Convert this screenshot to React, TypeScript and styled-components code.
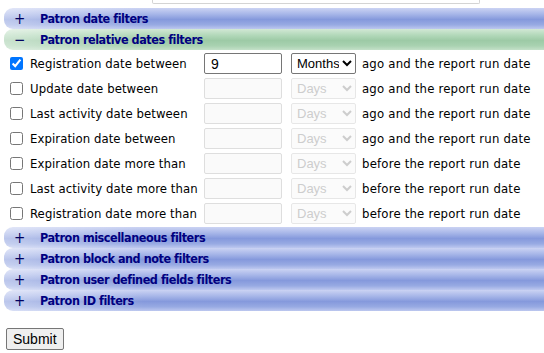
import React from 'react'
import styled, { createGlobalStyle } from 'styled-components'

const GlobalStyle = createGlobalStyle`
  body {
    margin: 0;
    background: #fff;
    font-family: 'DejaVu Sans Condensed', 'DejaVu Sans', sans-serif;
  }
`

type Unit = 'Days' | 'Months'

const RelativeRows: { label: string; checked: boolean; value: string; unit: Unit; tail: string }[] = [
  { label: 'Registration date between', checked: true, value: '9', unit: 'Months', tail: 'ago and the report run date' },
  { label: 'Update date between', checked: false, value: '', unit: 'Days', tail: 'ago and the report run date' },
  { label: 'Last activity date between', checked: false, value: '', unit: 'Days', tail: 'ago and the report run date' },
  { label: 'Expiration date between', checked: false, value: '', unit: 'Days', tail: 'ago and the report run date' },
  { label: 'Expiration date more than', checked: false, value: '', unit: 'Days', tail: 'before the report run date' },
  { label: 'Last activity date more than', checked: false, value: '', unit: 'Days', tail: 'before the report run date' },
  { label: 'Registration date more than', checked: false, value: '', unit: 'Days', tail: 'before the report run date' },
]

const LowerSections = [
  'Patron miscellaneous filters',
  'Patron block and note filters',
  'Patron user defined fields filters',
  'Patron ID filters',
]

const Page = styled.div`
  padding: 0 0 0 4px;
`

const CutOffPanel = styled.div`
  margin-left: 148px;
  width: 326px;
  height: 3px;
  border: 1px solid #d4d4d4;
  border-top: none;
  border-radius: 0 0 2px 2px;
`

const Sections = styled.div`
  margin-top: 4px;
`

const SectionBar = styled.div<{ $open?: boolean }>`
  display: flex;
  align-items: center;
  height: 21px;
  border-radius: 9px 0 0 9px;
  background:
    linear-gradient(to right, rgba(255, 255, 255, 0.45), rgba(255, 255, 255, 0) 140px),
    ${(p) =>
      p.$open
        ? 'linear-gradient(to bottom, #d2e8d5 0%, #b2d8b9 30%, #9dcaa6 55%, #a9d2b1 80%, #c4e0c8 100%)'
        : 'linear-gradient(to bottom, #cbd3f3 0%, #a6b5e8 30%, #8599dc 55%, #98aae3 80%, #bdc8ef 100%)'};
  color: #000080;
  font-weight: bold;
  font-size: 12.5px;
  letter-spacing: -0.45px;
`

const Toggle = styled.span`
  width: 36px;
  padding-left: 10px;
  box-sizing: border-box;
  font-size: 15px;
  font-weight: normal;
  letter-spacing: 0;
  color: #000060;
`

const FilterTable = styled.div`
  display: grid;
  grid-template-columns: 200px 87px 71px auto;
  grid-auto-rows: 25px;
  align-items: center;
  padding: 1px 0;
  font-size: 13px;
  color: #000;
`

const LabelCell = styled.label`
  display: flex;
  align-items: center;
  white-space: nowrap;
  letter-spacing: 0.08px;
`

const Check = styled.input`
  width: 13px;
  height: 13px;
  margin: 0 7px 0 6px;
`

const NumberInput = styled.input`
  box-sizing: border-box;
  width: 78px;
  height: 21px;
  padding: 1px 6px;
  font-family: 'Liberation Sans', Arial, sans-serif;
  font-size: 14px;
  border: 1px solid #767676;
  border-radius: 2px;
  &:disabled {
    background: #fafafa;
    border-color: #dedede;
  }
`

const UnitSelect = styled.select`
  box-sizing: border-box;
  width: 65px;
  height: 21px;
  padding-left: 1px;
  font-family: 'Liberation Sans', Arial, sans-serif;
  font-size: 13px;
  color: #000;
  border: 1px solid #767676;
  border-radius: 2px;
  background: #fff;
  &:disabled {
    color: #b8b8b8;
    background: #fafafa;
    border-color: #dedede;
  }
`

const Tail = styled.span`
  white-space: nowrap;
  letter-spacing: 0.2px;
`

const SubmitButton = styled.button`
  margin: 17px 0 0 2px;
  height: 22px;
  padding: 1px 6px;
  font-family: 'Liberation Sans', Arial, sans-serif;
  font-size: 14px;
  background: #efefef;
  border: 1px solid #767676;
  border-radius: 2px;
  color: #000;
`

const Section = ({ title, open }: { title: string; open?: boolean }) => (
  <SectionBar $open={open}>
    <Toggle>{open ? '−' : '+'}</Toggle>
    {title}
  </SectionBar>
)

export default function App() {
  return (
    <Page>
      <GlobalStyle />
      <CutOffPanel />
      <Sections>
        <Section title="Patron date filters" />
        <Section title="Patron relative dates filters" open />
        <FilterTable>
          {RelativeRows.map((row) => (
            <React.Fragment key={row.label}>
              <LabelCell>
                <Check type="checkbox" defaultChecked={row.checked} />
                {row.label}
              </LabelCell>
              <NumberInput type="text" defaultValue={row.value} disabled={!row.checked} />
              <UnitSelect defaultValue={row.unit} disabled={!row.checked}>
                <option>Days</option>
                <option>Months</option>
              </UnitSelect>
              <Tail>{row.tail}</Tail>
            </React.Fragment>
          ))}
        </FilterTable>
        {LowerSections.map((title) => (
          <Section key={title} title={title} />
        ))}
      </Sections>
      <SubmitButton type="button">Submit</SubmitButton>
    </Page>
  )
}
